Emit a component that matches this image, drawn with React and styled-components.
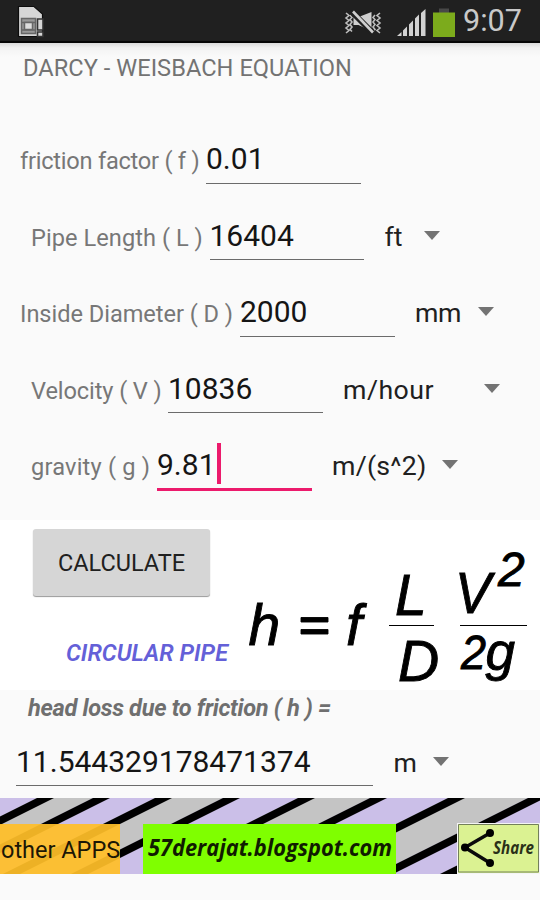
import styled, { createGlobalStyle } from "styled-components"

const GlobalStyle = createGlobalStyle`
    * {
        box-sizing: border-box;
    }
    body {
        margin: 0;
        background: #fafafa;
        font-family: Roboto, "Noto Sans", sans-serif;
    }
`
const Screen = styled.div`
    display: flex;
    flex-direction: column;
    width: 540px;
    height: 900px;
    overflow: hidden;
    background: #fafafa;
    color: #1b1b1b;
`
const StatusBar = styled.header`
    display: flex;
    align-items: center;
    height: 43px;
    flex: none;
    padding: 0 18px 0 17px;
    background: #202020;
    border-bottom: 2px solid #070707;
`
const StatusIcons = styled.div`
    display: flex;
    align-items: center;
    margin-left: auto;
`
const Clock = styled.span`
    width: 59px;
    margin-left: 8px;
    font-size: 30.6px;
    line-height: 41px;
    color: #c9c9c9;
    white-space: nowrap;
`
const Title = styled.h1`
    height: 93px;
    flex: none;
    margin: 0;
    padding: 8px 0 0 23px;
    background: linear-gradient(#dcdcdc, #f3f3f3 5px, #fafafa 14px);
    font-size: 23.6px;
    font-weight: 400;
    line-height: 34px;
    color: #737373;
    letter-spacing: 0.04px;
`
const Form = styled.main`
    height: 384px;
    flex: none;
    padding-top: 3px;
`
const Row = styled.div`
    display: flex;
    align-items: baseline;
    height: 76.5px;
    padding-left: ${({ $indent }) => $indent}px;
`
const Label = styled.label`
    flex: none;
    width: ${({ $width }) => $width}px;
    font-size: 23.6px;
    line-height: 36px;
    color: #777;
    white-space: nowrap;
    letter-spacing: ${({ $spacing }) => $spacing || 0}px;
`
const Field = styled.div`
    flex: none;
    width: ${({ $width }) => $width || 154.5}px;
    height: ${({ $active }) => ($active ? 46 : 44.5)}px;
    border-bottom: ${({ $active }) => ($active ? "3px solid #ec1a6c" : "1.5px solid #6b6b6b")};
    font-size: 30px;
    line-height: 40px;
    color: #151515;
    white-space: nowrap;
`
const Cursor = styled.span`
    display: inline-block;
    width: 4px;
    height: 41px;
    margin: -6px 0 -9px 1px;
    background: #ec1a6c;
`
const Unit = styled.span`
    flex: none;
    width: ${({ $width }) => $width}px;
    margin-left: 20.5px;
    font-size: 26.7px;
    line-height: 36px;
    color: #202020;
    white-space: nowrap;
    letter-spacing: ${({ $spacing }) => $spacing || 0}px;
`
const Arrow = styled.svg`
    flex: none;
`
const Formula = styled.section`
    display: flex;
    height: 170px;
    flex: none;
    background: #fff;
`
const FormulaLeft = styled.div`
    width: 240px;
    flex: none;
    padding: 9px 0 0 33px;
`
const Button = styled.button`
    display: block;
    width: 177px;
    height: 67px;
    padding: 0;
    border: 0;
    border-radius: 3px;
    background: #d6d6d6;
    box-shadow: 0 1px 1px #999;
    font-family: Roboto, sans-serif;
    font-size: 23.5px;
    color: #202020;
`
const Caption = styled.svg`
    display: block;
    margin: 39px 0 0 29px;
    overflow: visible;
`
const EquationArt = styled.svg`
    flex: none;
    overflow: visible;
`
const Result = styled.section`
    height: 108px;
    flex: none;
`
const ResultTitle = styled.div`
    height: 51.5px;
    padding-left: 28px;
    font-size: 23.6px;
    font-style: italic;
    font-weight: 700;
    line-height: 36px;
    color: #6f6f6f;
    white-space: nowrap;
    letter-spacing: -0.33px;
`
const Banner = styled.footer`
    position: relative;
    display: flex;
    align-items: flex-end;
    height: 76px;
    flex: none;
`
const Stripes = styled.svg`
    position: absolute;
    inset: 0;
`
const OtherApps = styled.div`
    position: relative;
    width: 120px;
    height: 50.5px;
    padding-left: 1px;
    background: rgba(255, 190, 40, 0.93);
    font-size: 23.5px;
    line-height: 53px;
    color: #1c1705;
    white-space: nowrap;
`
const BlogLink = styled.div`
    position: relative;
    width: 253px;
    height: 50.5px;
    margin-left: 23px;
    background: #7fff00;
`
const BlogText = styled.svg`
    display: block;
    overflow: visible;
`
const Share = styled.div`
    position: relative;
    width: 83px;
    height: 51px;
    margin-left: 61px;
    border: 1px solid #f4f4f4;
    background: #dbf292;
`

const fields = [
    { label: "friction factor ( f )", value: "0.01", indent: 20, labelWidth: 186, spacing: -0.24 },
    { label: "Pipe Length ( L )", value: "16404", indent: 31, labelWidth: 178.5, spacing: 0.05, unit: "ft", unitWidth: 39 },
    { label: "Inside Diameter ( D )", value: "2000", indent: 20, labelWidth: 220, spacing: -0.04, unit: "mm", unitWidth: 63, unitSpacing: -0.5 },
    { label: "Velocity ( V )", value: "10836", indent: 31, labelWidth: 137, spacing: -0.1, unit: "m/hour", unitWidth: 141, unitSpacing: 0.5 },
    { label: "gravity ( g )", value: "9.81", indent: 31, labelWidth: 126, spacing: 0.2, unit: "m/(s^2)", unitWidth: 110, unitSpacing: 0.25, active: true },
]

const stripes = [37, 93, 155, 223, 298, 370, 448, 528, 592]

const DropArrow = () => (
    <Arrow width="16" height="15" viewBox="0 0 16 15">
        <path d="M0 0h16L8 9z" fill="#737373" />
    </Arrow>
)

const SimIcon = () => (
    <svg width="30" height="34" viewBox="0 0 30 34">
        <path d="M1.500 2.500h15.500l8.500 7.500v22.500h-24z" fill="#d6d6d6" stroke="#0c0c0c" strokeWidth="1.200" />
        <path d="M4.500 14.500h14v15h-14z" fill="#999" />
        <g fill="none" stroke="#666" strokeWidth="1.500">
            <path d="M4.500 14.500h14v15h-14zM4.500 18.500h14M4.500 26h14" />
            <path d="M7.500 18.500h8v7h-8z" fill="#ddd" />
        </g>
        <path d="M20.500 15h5.500v11h-5.500zM20.500 28h5.500v4.500h-5.500z" fill="#d6d6d6" stroke="#333" strokeWidth="1.600" />
    </svg>
)

const MuteIcon = () => (
    <svg width="38" height="30" viewBox="0 -4 38 30">
        <g fill="none" stroke="#bdbdbd" strokeWidth="1.600">
            <path d="M2 3l3 2.500-3 2.500 3 2.500-3 2.500 3 2.500-3 2.500 3 2.500-3 2.500" />
            <path d="M6 5l2 2.500-2 2 2 2.500-2 2.500 2 2.500-2 2.500 2 2" />
            <path d="M36 3l-3 2.500 3 2.500-3 2.500 3 2.500-3 2.500 3 2.500-3 2.500 3 2.500" />
            <path d="M31 5l-2 2.500 2 2-2 2.500 2 2.500-2 2.500 2 2.500-2 2" />
        </g>
        <path d="M9.500 7h5l13-5v19l-13-6h-5z" fill="#cfcfcf" />
        <path d="M8 2l21 21" stroke="#202020" strokeWidth="6" />
        <path d="M9 1.500l20 21" stroke="#cfcfcf" strokeWidth="2.600" />
    </svg>
)

const SignalIcon = () => (
    <svg width="29" height="30" viewBox="0 -2 29 30">
        <path d="M0 28L4.500 24v4zM6 22.500l4-4V28H6zM12 16.500l4-4V28h-4zM18 10.500l4-4V28h-4zM24 5L28.500 1v27H24z" fill="#d2d2d2" />
    </svg>
)

const BatteryIcon = () => (
    <svg width="22" height="32" viewBox="0 -2 22 32">
        <path d="M6 1.500h10v5H6z" fill="#484848" />
        <path d="M0 5.500h22v24.500H0z" fill="#7cab1c" />
    </svg>
)

const Equation = () => (
    <EquationArt
        width="300"
        height="170"
        viewBox="240 520 300 170"
        fontFamily="Liberation Sans, Arial, sans-serif"
        fontStyle="italic"
        fontSize="57"
        stroke="#000"
        strokeWidth="0.9"
    >
        <text x="248.500" y="645">h</text>
        <path d="M301 617.500h27v4.500h-27zM301 629.500h27v4.500h-27z" />
        <text x="346" y="645">f</text>
        <text x="395" y="615">L</text>
        <path d="M389 625h45v1h-45zM460 625h67v1h-67z" stroke="none" />
        <text x="398" y="680.500">D</text>
        <text x="455" y="613" textLength="36" lengthAdjust="spacingAndGlyphs">V</text>
        <text x="498" y="585.500" fontSize="48">2</text>
        <text x="461" y="668.500" fontSize="48" textLength="25" lengthAdjust="spacingAndGlyphs">2</text>
        <text x="485.500" y="669.500" fontSize="53">g</text>
    </EquationArt>
)

const App = () => {
    return (
        <>
            <GlobalStyle />
            <Screen>
                <StatusBar>
                    <SimIcon />
                    <StatusIcons>
                        <MuteIcon />
                        <svg width="15" height="1" />
                        <SignalIcon />
                        <svg width="7" height="1" />
                        <BatteryIcon />
                        <Clock>9:07</Clock>
                    </StatusIcons>
                </StatusBar>
                <Title>DARCY - WEISBACH EQUATION</Title>
                <Form>
                    {fields.map((field) => (
                        <Row key={field.label} $indent={field.indent}>
                            <Label $width={field.labelWidth} $spacing={field.spacing}>{field.label}</Label>
                            <Field $active={field.active}>
                                {field.value}
                                {field.active && <Cursor />}
                            </Field>
                            {field.unit && <Unit $width={field.unitWidth} $spacing={field.unitSpacing}>{field.unit}</Unit>}
                            {field.unit && <DropArrow />}
                        </Row>
                    ))}
                </Form>
                <Formula>
                    <FormulaLeft>
                        <Button>CALCULATE</Button>
                        <Caption width="170" height="30">
                            <text x="4" y="26" textLength="162" lengthAdjust="spacingAndGlyphs" fontFamily="Roboto" fontSize="24.500" fontWeight="600" fontStyle="italic" fill="#6460d8">
                                CIRCULAR PIPE
                            </text>
                        </Caption>
                    </FormulaLeft>
                    <Equation />
                </Formula>
                <Result>
                    <ResultTitle>head loss due to friction ( h ) =</ResultTitle>
                    <Row $indent={16}>
                        <Field $width={357}>11.544329178471374</Field>
                        <Unit $width={39}>m</Unit>
                        <DropArrow />
                    </Row>
                </Result>
                <Banner>
                    <Stripes width="540" height="76" viewBox="0 0 540 76">
                        <path d="M0 0h540v76H0z" fill="#cbbfe8" />
                        {[0, 2, 4, 6].map((i) => (
                            <path key={i} d={`M${stripes[i]} 0H${stripes[i + 1]}l-152 76H${stripes[i] - 152}z`} fill="#c4c4c4" />
                        ))}
                        {stripes.map((x) => (
                            <path key={x} d={`M${x} 0h17l-152 76h-17z`} />
                        ))}
                    </Stripes>
                    <OtherApps>other APPS</OtherApps>
                    <BlogLink>
                        <BlogText width="253" height="50">
                            <text x="5" y="32" textLength="244" lengthAdjust="spacingAndGlyphs" fontFamily="Open Sans" fontSize="23.500" fontWeight="700" fontStyle="italic" fill="#101c00">
                                57derajat.blogspot.com
                            </text>
                        </BlogText>
                    </BlogLink>
                    <Share>
                        <svg width="81" height="49" viewBox="0 0 81 49">
                            <path d="M.5 .5h80v47.500H.5z" fill="none" stroke="#73805a" />
                            <path d="M32 9L7 23.500 32 39" fill="none" stroke="#0b0b0b" strokeWidth="3.500" />
                            <circle cx="7" cy="23.500" r="4" />
                            <circle cx="32" cy="9" r="4" />
                            <circle cx="32" cy="39" r="4" />
                            <text x="35" y="30" textLength="41" lengthAdjust="spacingAndGlyphs" fontFamily="Open Sans" fontSize="17.500" fontWeight="700" fontStyle="italic" fill="#2a3018">
                                Share
                            </text>
                        </svg>
                    </Share>
                </Banner>
            </Screen>
        </>
    )
}

export default App
